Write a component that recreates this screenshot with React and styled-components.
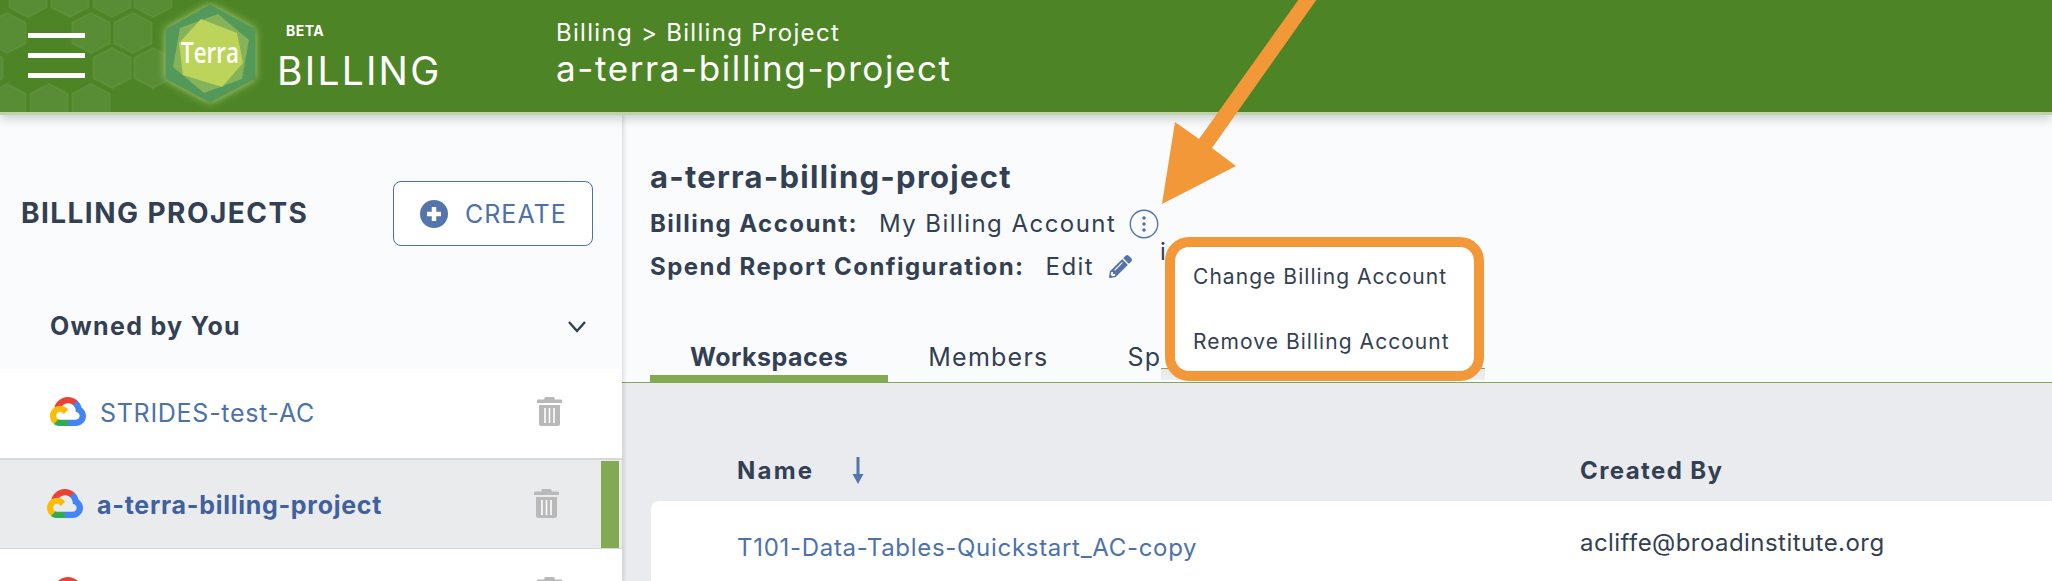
import React from "react";
import styled, { createGlobalStyle } from "styled-components";
import { FaPencilAlt } from "react-icons/fa";

const Global = createGlobalStyle`
  html, body { margin: 0; padding: 0; background: #fafbfd; overflow: hidden; }
  #root { width: 2052px; height: 581px; }
  * { box-sizing: border-box; }
`;

const Page = styled.div`
  position: relative;
  width: 2052px;
  height: 581px;
  display: flex;
  flex-direction: column;
  overflow: hidden;
  font-family: Inter, "Liberation Sans", sans-serif;
  color: #333f52;
`;

const Header = styled.header`
  position: relative;
  z-index: 3;
  flex: 0 0 115px;
  height: 115px;
  background: #4d8526;
  border-bottom: 3px solid #bdd5a3;
  box-shadow: 0 4px 10px rgba(0, 0, 0, 0.18);
  display: flex;
  align-items: stretch;
`;

const HexBackdrop = styled.svg`
  position: absolute;
  left: 0;
  top: 0;
`;

const Burger = styled.div`
  position: relative;
  flex: none;
  width: 57px;
  margin: 33px 0 0 28px;
  display: flex;
  flex-direction: column;
  gap: 15px;
`;

const BurgerBar = styled.span`
  display: block;
  height: 5px;
  background: #fff;
`;

const LogoMark = styled.svg`
  position: relative;
  flex: none;
  margin-left: 70px;
`;

const Brand = styled.div`
  position: relative;
  flex: 0 0 291px;
  padding: 23px 0 0 14px;
  color: #fff;
`;

const Beta = styled.div`
  font-size: 14px;
  line-height: 16px;
  font-weight: 700;
  letter-spacing: 0.5px;
  margin-left: 7px;
`;

const BrandName = styled.div`
  font-size: 39px;
  line-height: 44px;
  font-weight: 400;
  letter-spacing: 2.2px;
  margin: 10px 0 0 -2px;
`;

const Crumbs = styled.div`
  position: relative;
  padding-top: 19px;
  color: #fff;
`;

const CrumbTrail = styled.div`
  font-size: 24px;
  line-height: 28px;
  letter-spacing: 1.3px;
`;

const CrumbTitle = styled.div`
  font-size: 35px;
  line-height: 42px;
  letter-spacing: 1.6px;
`;

const Body = styled.div`
  flex: 1;
  display: flex;
  min-height: 0;
`;

const Sidebar = styled.aside`
  position: relative;
  z-index: 2;
  flex: 0 0 622px;
  background: #fff;
  box-shadow: 2px 0 4px rgba(0, 0, 0, 0.12);
  display: flex;
  flex-direction: column;
`;

const SideTop = styled.div`
  flex: 0 0 254px;
  background: #fafbfd;
  display: flex;
  flex-direction: column;
`;

const TitleRow = styled.div`
  display: flex;
  align-items: center;
  justify-content: space-between;
  padding: 65px 29px 0 21px;
`;

const SideTitle = styled.h2`
  margin: 0;
  padding-top: 1px;
  font-size: 28px;
  font-weight: 700;
  letter-spacing: 1.45px;
  line-height: 65px;
`;

const CreateButton = styled.button`
  width: 200px;
  height: 65px;
  background: #fff;
  border: 1px solid #4d72aa;
  border-radius: 8px;
  color: #4d72aa;
  font: 400 25px Inter, "Liberation Sans", sans-serif;
  letter-spacing: 1px;
  display: flex;
  align-items: center;
  gap: 17px;
  padding: 1px 0 0 26px;
`;

const GroupRow = styled.div`
  display: flex;
  align-items: center;
  justify-content: space-between;
  padding: 60px 35px 0 50px;
  font-size: 25px;
  font-weight: 700;
  letter-spacing: 1.3px;
  line-height: 40px;
`;

const ProjectRow = styled.div`
  position: relative;
  flex: 0 0 ${(p) => p.$height}px;
  display: flex;
  align-items: flex-start;
  padding: ${(p) => p.$top}px ${(p) => (p.$selected ? 63 : 60)}px 0 ${(p) => (p.$selected ? 47 : 50)}px;
  background: ${(p) => (p.$selected ? "#eaebed" : "#fff")};
  border-bottom: ${(p) => p.$rule}px solid #d6d7db;
`;

const ProjectName = styled.span`
  flex: 1;
  margin-left: 14px;
  font-size: 25px;
  line-height: 32px;
  letter-spacing: 0.72px;
  font-weight: ${(p) => (p.$selected ? 700 : 400)};
  color: ${(p) => (p.$selected ? "#3f619e" : "#4d72aa")};
`;

const SelectedBar = styled.span`
  position: absolute;
  right: 3px;
  top: 1px;
  bottom: 0;
  width: 18px;
  background: #82aa52;
`;

const Main = styled.main`
  flex: 1;
  min-width: 0;
  background: #eaebef;
  display: flex;
  flex-direction: column;
`;

const Summary = styled.section`
  flex: 0 0 268px;
  background: #fafbfd;
  border-bottom: 1px solid #82aa52;
  padding: 43px 0 0 28px;
  display: flex;
  flex-direction: column;
`;

const ProjectTitle = styled.h1`
  margin: 0;
  font-size: 31px;
  line-height: 38px;
  font-weight: 700;
  letter-spacing: 1.25px;
`;

const InfoRow = styled.div`
  display: flex;
  align-items: center;
  height: 43px;
  font-size: 24px;
  letter-spacing: 1.45px;
  &:first-of-type { margin-top: 6px; }
`;

const InfoLabel = styled.span`
  font-weight: 700;
`;

const InfoValue = styled.span`
  margin-left: 21px;
`;

const IconSlot = styled.span`
  display: inline-flex;
  margin-left: ${(p) => p.$gap}px;
  color: #5574ab;
`;

const Tabs = styled.nav`
  display: flex;
  margin-top: auto;
`;

const Tab = styled.div`
  height: 43px;
  padding: 0 ${(p) => p.$pad}px;
  font-size: 25px;
  line-height: 36px;
  letter-spacing: ${(p) => (p.$active ? 0.5 : 1.25)}px;
  font-weight: ${(p) => (p.$active ? 700 : 400)};
  border-bottom: ${(p) => (p.$active ? "7px solid #82aa52" : "none")};
`;

const TableHead = styled.div`
  display: grid;
  grid-template-columns: 843px 1fr;
  padding: 57px 0 0 115px;
  height: 118px;
  align-items: center;
  font-size: 24px;
  font-weight: 700;
  letter-spacing: 1.4px;
`;

const NameHead = styled.div`
  display: flex;
  align-items: center;
  gap: 37px;
  letter-spacing: 2.2px;
`;

const TableCard = styled.div`
  flex: 1;
  margin-left: 29px;
  background: #fff;
  border-radius: 8px 0 0 0;
  display: grid;
  grid-template-columns: 843px 1fr;
  padding: 31px 0 0 86px;
  align-items: start;
  font-size: 24px;
`;

const WorkspaceLink = styled.span`
  color: #4d72aa;
  margin-top: 1px;
  letter-spacing: 0.7px;
`;

const Creator = styled.span`
  margin-top: -4px;
  letter-spacing: 0.45px;
`;

const MenuShadow = styled.div`
  position: absolute;
  z-index: 5;
  left: 1161px;
  top: 368px;
  width: 324px;
  height: 12px;
  border-top: 1px solid #82aa52;
  background: linear-gradient(#e6e7eb, #eeeff2);
`;

const StrayGlyph = styled.span`
  position: absolute;
  z-index: 5;
  left: 1160px;
  top: 236px;
  font-size: 24px;
  line-height: 32px;
`;

const Menu = styled.div`
  position: absolute;
  z-index: 6;
  left: 1165px;
  top: 237px;
  width: 319px;
  height: 144px;
  background: #fff;
  border: 10px solid #f29838;
  border-radius: 24px;
  padding: 12px 0 0 18px;
  display: flex;
  flex-direction: column;
  gap: 29px;
  font-size: 21px;
  line-height: 36px;
  letter-spacing: 1.05px;
`;

const Arrow = styled.svg`
  position: absolute;
  z-index: 7;
  left: 1150px;
  top: 0;
`;

const Cloud = () => (
  <svg width="36" height="29" viewBox="0 0 256 206" style={{ flex: "none" }}>
    <path fill="#EA4335" d="M170.252 56.819l22.253-22.253 1.483-9.37C153.437-11.677 88.976-7.496 52.42 33.92 42.267 45.423 34.734 59.764 30.717 74.573l7.97-1.123 44.505-7.34 3.436-3.513c19.797-21.742 53.27-24.667 76.128-6.168l7.496.39z" />
    <path fill="#4285F4" d="M224.205 73.918c-5.115-18.836-15.616-35.769-30.217-48.722l-31.232 31.232c13.188 10.776 20.701 27.01 20.379 44.037v5.544c15.351 0 27.797 12.445 27.797 27.796 0 15.352-12.446 27.485-27.797 27.485h-55.671l-5.466 5.934v33.34l5.466 5.231h55.671c39.93.311 72.552-31.494 72.863-71.424.188-24.203-11.745-46.893-31.793-60.453" />
    <path fill="#34A853" d="M71.87 205.796h55.593V161.29H71.87c-3.961-.001-7.797-.852-11.399-2.498l-7.887 2.42-22.409 22.253-1.952 7.574c12.567 9.489 27.9 14.825 43.647 14.757" />
    <path fill="#FBBC05" d="M71.87 61.425C31.94 61.664-.237 94.228.001 134.159c.134 22.298 10.547 43.281 28.222 56.88l32.248-32.248c-13.991-6.321-20.208-22.786-13.887-36.776 6.32-13.99 22.786-20.207 36.775-13.887 6.161 2.784 11.094 7.717 13.887 13.887l32.248-32.248c-13.721-17.937-35.041-28.424-57.624-28.342" />
  </svg>
);

const Trash = () => (
  <svg width="25" height="29" viewBox="0 0 25 29" style={{ flex: "none" }}>
    <path fill="#b9b9b9" d="M8 0h9l1 2.5h6c.6 0 1 .4 1 1V6H0V3.5c0-.6.4-1 1-1h6zM2 8h21v19c0 1.1-.9 2-2 2H4c-1.1 0-2-.9-2-2z" />
    <path stroke="#fff" strokeWidth="1.6" d="M8 11v15M12.5 11v15M17 11v15" />
  </svg>
);

const hexPath = (cx, cy) => {
  const w = 18.8, h = 20.3, q = 10.4;
  return `M${cx} ${cy - h}L${cx + w} ${cy - q}V${cy + q}L${cx} ${cy + h}L${cx - w} ${cy + q}V${cy - q}Z`;
};

const hexes = [
  [28, -3], [70, -3], [112, -3], [153, -3],
  [7, 33], [91, 33], [133, 33],
  [-16, 68], [112, 68], [153, 68],
  [7, 104], [49, 104], [91, 104],
];

export default function App() {
  return (
    <Page>
      <Global />
      <Header>
        <HexBackdrop width="190" height="112" viewBox="0 0 190 112">
          {hexes.map(([x, y]) => (
            <path key={`${x}-${y}`} d={hexPath(x, y)} fill="#fff" fillOpacity="0.07" stroke="#fff" strokeOpacity="0.05" strokeWidth="2" strokeLinejoin="round" />
          ))}
        </HexBackdrop>
        <Burger>
          <BurgerBar />
          <BurgerBar />
          <BurgerBar />
        </Burger>
        <LogoMark width="110" height="112" viewBox="155 0 110 112">
          <defs>
            <filter id="logoGlow" x="-30%" y="-30%" width="160%" height="160%">
              <feGaussianBlur stdDeviation="5" />
            </filter>
          </defs>
          <path d="M210 6L254 30V78L210 101L167 78V30Z" fill="#e2f09a" opacity="0.95" filter="url(#logoGlow)" />
          <path d="M210 6L254 30V78L210 101L167 78V30Z" fill="#52995a" stroke="#52995a" strokeWidth="3" strokeLinejoin="round" />
          <path d="M218 14L249 40L242 79L204 93L173 67L180 28Z" fill="#86b25a" />
          <path d="M201 19L237 33L243 63L222 87L183 75L179 43Z" fill="#bcd45a" />
          <text x="181" y="63" fontFamily="'Open Sans', sans-serif" fontWeight="600" fontSize="29" fill="#fff" textLength="58" lengthAdjust="spacingAndGlyphs">Terra</text>
        </LogoMark>
        <Brand>
          <Beta>BETA</Beta>
          <BrandName>BILLING</BrandName>
        </Brand>
        <Crumbs>
          <CrumbTrail>Billing &gt; Billing Project</CrumbTrail>
          <CrumbTitle>a-terra-billing-project</CrumbTitle>
        </Crumbs>
      </Header>

      <Body>
        <Sidebar>
          <SideTop>
            <TitleRow>
              <SideTitle>BILLING PROJECTS</SideTitle>
              <CreateButton>
                <svg width="28" height="28" viewBox="0 0 28 28">
                  <circle cx="14" cy="14" r="14" fill="#5574ab" />
                  <path d="M14 7v14M7 14h14" stroke="#fff" strokeWidth="4.5" />
                </svg>
                CREATE
              </CreateButton>
            </TitleRow>
            <GroupRow>
              Owned by You
              <svg width="20" height="13" viewBox="0 0 20 13">
                <path d="M2 2l8 9 8-9" fill="none" stroke="#333f52" strokeWidth="2.4" />
              </svg>
            </GroupRow>
          </SideTop>
          <ProjectRow $height={91} $top={28} $rule={2}>
            <Cloud />
            <ProjectName>STRIDES-test-AC</ProjectName>
            <Trash />
          </ProjectRow>
          <ProjectRow $height={89} $top={29} $rule={1} $selected>
            <Cloud />
            <ProjectName $selected>a-terra-billing-project</ProjectName>
            <Trash />
            <SelectedBar />
          </ProjectRow>
          <ProjectRow $height={60} $top={28} $rule={0}>
            <Cloud />
            <ProjectName />
            <Trash />
          </ProjectRow>
        </Sidebar>

        <Main>
          <Summary>
            <ProjectTitle>a-terra-billing-project</ProjectTitle>
            <InfoRow>
              <InfoLabel>Billing Account:</InfoLabel>
              <InfoValue>My Billing Account</InfoValue>
              <IconSlot $gap={13}>
                <svg width="30" height="30" viewBox="0 0 30 30">
                  <circle cx="15" cy="15" r="13.7" fill="none" stroke="#5574ab" strokeWidth="1.4" />
                  <circle cx="15" cy="9" r="1.8" fill="#5574ab" />
                  <circle cx="15" cy="15" r="1.8" fill="#5574ab" />
                  <circle cx="15" cy="21" r="1.8" fill="#5574ab" />
                </svg>
              </IconSlot>
            </InfoRow>
            <InfoRow>
              <InfoLabel>Spend Report Configuration:</InfoLabel>
              <InfoValue>Edit</InfoValue>
              <IconSlot $gap={15}>
                <FaPencilAlt size={23} />
              </IconSlot>
            </InfoRow>
            <Tabs>
              <Tab $active $pad={40}>Workspaces</Tab>
              <Tab $pad={40}>Members</Tab>
              <Tab $pad={39}>Sp</Tab>
            </Tabs>
          </Summary>
          <TableHead>
            <NameHead>
              Name
              <svg width="14" height="27" viewBox="0 0 14 27">
                <path d="M7 0v20" stroke="#5574ab" strokeWidth="3" />
                <path d="M1.5 17h11L7 27z" fill="#5574ab" />
              </svg>
            </NameHead>
            <div>Created By</div>
          </TableHead>
          <TableCard>
            <WorkspaceLink>T101-Data-Tables-Quickstart_AC-copy</WorkspaceLink>
            <Creator>acliffe@broadinstitute.org</Creator>
          </TableCard>
        </Main>
      </Body>

      <StrayGlyph>i</StrayGlyph>
      <MenuShadow />
      <Menu>
        <div>Change Billing Account</div>
        <div>Remove Billing Account</div>
      </Menu>
      <Arrow width="100" height="210" viewBox="1150 0 100 210" overflow="visible">
        <path d="M1299 -1H1317L1212 148L1236 166L1162 204L1175 122L1199 139Z" fill="#f29838" />
      </Arrow>
    </Page>
  );
}
